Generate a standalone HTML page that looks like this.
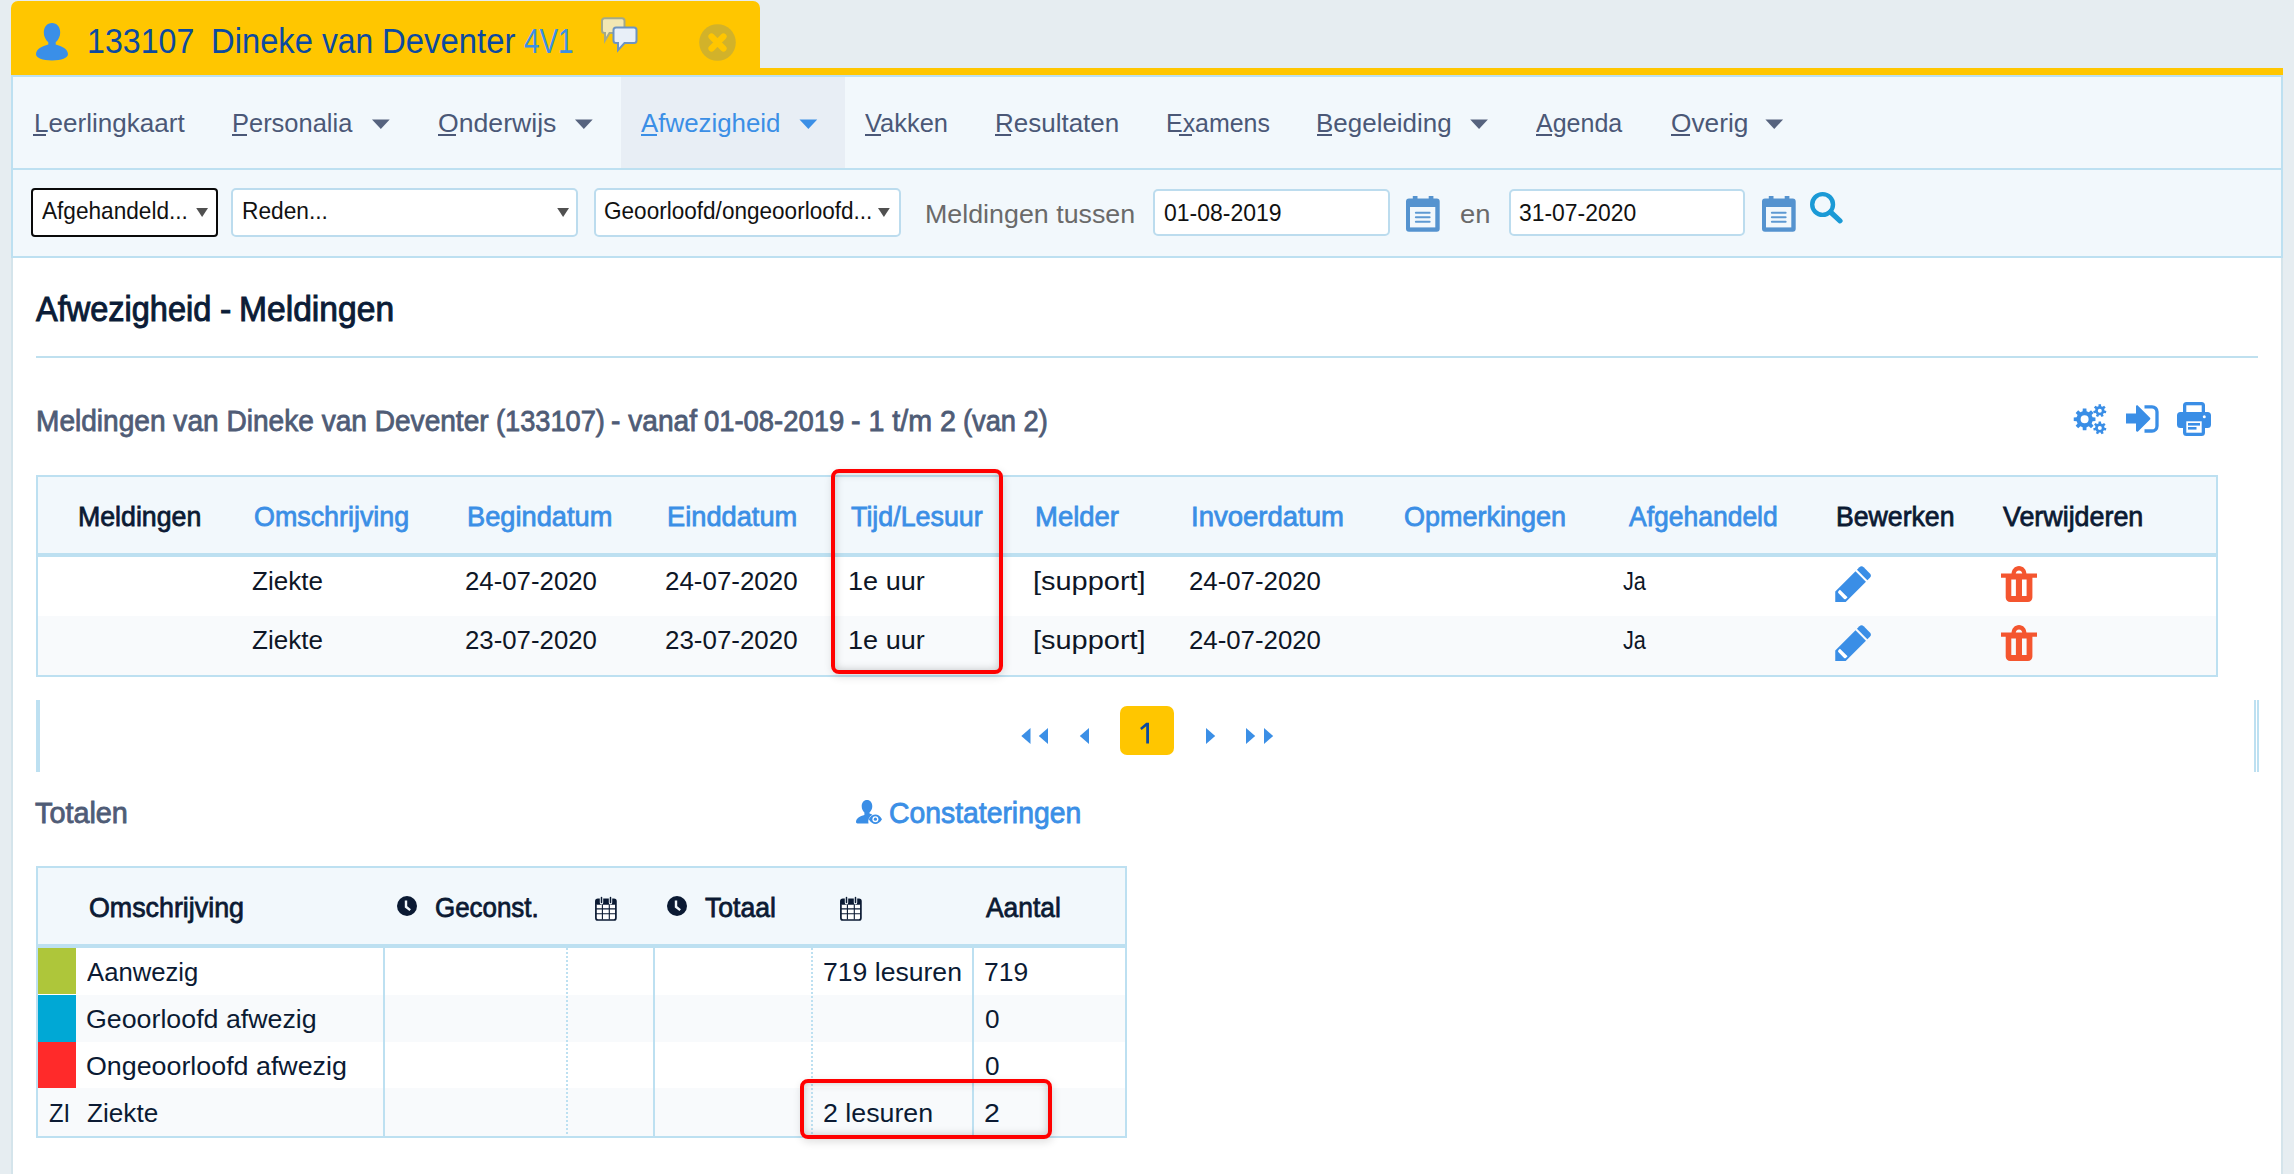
<!DOCTYPE html>
<html><head><meta charset="utf-8"><title>Afwezigheid - Meldingen</title>
<style>
html,body{margin:0;padding:0;}
body{width:2294px;height:1174px;overflow:hidden;background:#e6edf1;position:relative;font-family:'Liberation Sans',sans-serif;}
.a{position:absolute;box-sizing:border-box;}
.t{position:absolute;white-space:nowrap;line-height:1;transform-origin:0 0;font-family:'Liberation Sans',sans-serif;}
svg{position:absolute;overflow:visible;}
</style></head><body>
<!-- tab -->
<div class="a" style="left:11px;top:1px;width:749px;height:74px;background:#ffc600;border-radius:7px 7px 0 0"></div>
<div class="a" style="left:11px;top:68px;width:2272px;height:7px;background:#ffc600"></div>
<!-- user icon -->
<svg style="left:36px;top:23px" width="32" height="38" viewBox="0 0 32 38">
 <path fill="#3a8fe8" d="M16 0c5 0 8.2 4 8.2 9.5c0 4.2-2 7.5-4.5 9.8v2.2c6.2 1.6 12.3 4.6 12.3 9.8c0 3.6-6.5 6.2-16 6.2S0 34.9 0 31.3c0-5.2 6.1-8.2 12.3-9.8v-2.2C9.8 17 7.8 13.7 7.8 9.5C7.8 4 11 0 16 0z"/>
</svg>
<!-- chat icon -->
<svg style="left:600px;top:16px" width="40" height="36" viewBox="0 0 40 36">
 <path fill="#f2e7b3" stroke="#a3a98a" stroke-width="2" d="M4.5 2.3h17.5a2.5 2.5 0 0 1 2.5 2.5v9.7a2.5 2.5 0 0 1-2.5 2.5H9.5l-4.5 7.5v-7.5h-0.5a2.5 2.5 0 0 1-2.5-2.5V4.8a2.5 2.5 0 0 1 2.5-2.5z"/>
 <path fill="#e8eff8" stroke="#6d94c3" stroke-width="2" d="M16 11.4h18a2.5 2.5 0 0 1 2.5 2.5v10.7a2.5 2.5 0 0 1-2.5 2.5H24.5l-6.5 7v-7h-2a2.5 2.5 0 0 1-2.5-2.5V13.9a2.5 2.5 0 0 1 2.5-2.5z"/>
</svg>
<!-- close icon -->
<svg style="left:699px;top:23.5px" width="37" height="37" viewBox="0 0 37 37">
 <circle cx="18.5" cy="18.5" r="18.3" fill="#d2b22a"/>
 <path d="M12.5 12.5L24.5 24.5M24.5 12.5L12.5 24.5" stroke="#ffc600" stroke-width="6.2" stroke-linecap="round"/>
</svg>
<!-- panel -->
<div class="a" style="left:11px;top:75px;width:2272px;height:183px;background:#f2f8fc;border:2px solid #bde0f1"></div>
<div class="a" style="left:13px;top:168px;width:2268px;height:2px;background:#bde0f1"></div>
<div class="a" style="left:621px;top:77px;width:224px;height:91px;background:#e8eef5"></div>
<div class="a" style="left:11px;top:258px;width:2272px;height:916px;background:#fff;border-left:2px solid #d4e4eb;border-right:2px solid #d4e4eb"></div>
<!-- nav triangles -->
<svg style="left:0;top:0" width="2294" height="200">
 <g fill="#56637e">
  <path d="M372 119.4h17.7l-8.85 9.6z"/>
  <path d="M575 119.4h17.7l-8.85 9.6z"/>
  <path d="M1470.2 119.4h17.7l-8.85 9.6z"/>
  <path d="M1765.4 119.4h17.7l-8.85 9.6z"/>
 </g>
 <path fill="#3b8fe6" d="M799.5 119.4h17.7l-8.85 9.6z"/>
</svg>
<!-- nav underlines -->
<div class="a" style="left:33px;top:134px;width:13px;height:2px;background:#4b5877"></div>
<div class="a" style="left:232px;top:134px;width:15px;height:2px;background:#4b5877"></div>
<div class="a" style="left:438px;top:134px;width:18px;height:2px;background:#4b5877"></div>
<div class="a" style="left:641px;top:134px;width:16px;height:2px;background:#3b8fe6"></div>
<div class="a" style="left:865px;top:134px;width:16px;height:2px;background:#4b5877"></div>
<div class="a" style="left:995px;top:134px;width:16px;height:2px;background:#4b5877"></div>
<div class="a" style="left:1179px;top:134px;width:13px;height:2px;background:#4b5877"></div>
<div class="a" style="left:1317px;top:134px;width:15px;height:2px;background:#4b5877"></div>
<div class="a" style="left:1536px;top:134px;width:16px;height:2px;background:#4b5877"></div>
<div class="a" style="left:1671px;top:134px;width:19px;height:2px;background:#4b5877"></div>
<!-- selects -->
<div class="a" style="left:31px;top:188px;width:186.5px;height:48.5px;background:#fff;border:2.3px solid #0a0a0a;border-radius:4px"></div>
<div class="a" style="left:231.4px;top:188px;width:347px;height:48.5px;background:#fff;border:2px solid #bcdcee;border-radius:5px"></div>
<div class="a" style="left:593.6px;top:188px;width:307px;height:48.5px;background:#fff;border:2px solid #bcdcee;border-radius:5px"></div>
<div class="a" style="left:1152.6px;top:188.5px;width:237.5px;height:47.7px;background:#fff;border:2px solid #bcdcee;border-radius:5px"></div>
<div class="a" style="left:1508.8px;top:188.5px;width:236.5px;height:47.7px;background:#fff;border:2px solid #bcdcee;border-radius:5px"></div>
<svg style="left:0;top:0" width="2294" height="260">
 <g fill="#505050">
  <path d="M196.2 208h11.8l-5.9 9z"/>
  <path d="M557.2 208h11.8l-5.9 9z"/>
  <path d="M878 208h11.8l-5.9 9z"/>
 </g>
</svg>
<!-- calendar icons -->
<svg style="left:1406px;top:196px" width="34" height="36" viewBox="0 0 34 36">
 <path fill="#5593cf" d="M6.8 0h4.7v2.6h11.2V0h4.7v2.6h3.3a3 3 0 0 1 3 3v27.2a3 3 0 0 1-3 3H3a3 3 0 0 1-3-3V5.6a3 3 0 0 1 3-3h3.8z"/>
 <rect x="4" y="11" width="25.3" height="20.4" fill="#f2f8fc"/>
 <path d="M9.9 16.8h13.7M9.9 21.3h13.7M9.9 25.8h13.7" stroke="#5d99d2" stroke-width="2.1" stroke-linecap="round"/>
</svg>
<svg style="left:1762px;top:196px" width="34" height="36" viewBox="0 0 34 36">
 <path fill="#5593cf" d="M6.8 0h4.7v2.6h11.2V0h4.7v2.6h3.3a3 3 0 0 1 3 3v27.2a3 3 0 0 1-3 3H3a3 3 0 0 1-3-3V5.6a3 3 0 0 1 3-3h3.8z"/>
 <rect x="4" y="11" width="25.3" height="20.4" fill="#f2f8fc"/>
 <path d="M9.9 16.8h13.7M9.9 21.3h13.7M9.9 25.8h13.7" stroke="#5d99d2" stroke-width="2.1" stroke-linecap="round"/>
</svg>
<!-- search -->
<svg style="left:1812px;top:192.2px" width="34" height="32" viewBox="0 0 34 32">
 <circle cx="10.6" cy="12.5" r="10.4" fill="none" stroke="#1b9ad6" stroke-width="4.4"/>
 <path d="M18.5 20L28 28.8" stroke="#1b9ad6" stroke-width="5.2" stroke-linecap="round"/>
</svg>
<!-- hr -->
<div class="a" style="left:36px;top:355.5px;width:2222px;height:2px;background:#bfe0ef"></div>
<!-- toolbar icons -->
<svg style="left:2074px;top:404px" width="33" height="32" viewBox="0 0 33 32">
 <path fill="#3a8ee6" fill-rule="evenodd" d="M8.62 7.34 L8.79 4.45 L12.41 4.45 L12.58 7.34 L14.83 8.27 L17.00 6.35 L19.55 8.90 L17.63 11.07 L18.56 13.32 L21.45 13.49 L21.45 17.11 L18.56 17.28 L17.63 19.53 L19.55 21.70 L17.00 24.25 L14.83 22.33 L12.58 23.26 L12.41 26.15 L8.79 26.15 L8.62 23.26 L6.37 22.33 L4.20 24.25 L1.65 21.70 L3.57 19.53 L2.64 17.28 L-0.25 17.11 L-0.25 13.49 L2.64 13.32 L3.57 11.07 L1.65 8.90 L4.20 6.35 L6.37 8.27ZM14.60 15.30A4.0 4.0 0 1 0 6.60 15.30A4.0 4.0 0 1 0 14.60 15.30Z"/>
 <path fill="#3a8ee6" fill-rule="evenodd" d="M24.51 2.18 L24.56 0.22 L27.04 0.22 L27.09 2.18 L28.53 2.87 L30.10 1.69 L31.64 3.62 L30.14 4.89 L30.49 6.45 L32.40 6.94 L31.85 9.35 L29.92 8.96 L28.92 10.21 L29.73 12.00 L27.50 13.08 L26.60 11.33 L25.00 11.33 L24.10 13.08 L21.87 12.00 L22.68 10.21 L21.68 8.96 L19.75 9.35 L19.20 6.94 L21.11 6.45 L21.46 4.89 L19.96 3.62 L21.50 1.69 L23.07 2.87ZM27.80 6.70A2.0 2.0 0 1 0 23.80 6.70A2.0 2.0 0 1 0 27.80 6.70Z"/>
 <path fill="#3a8ee6" fill-rule="evenodd" d="M24.51 19.38 L24.56 17.42 L27.04 17.42 L27.09 19.38 L28.53 20.07 L30.10 18.89 L31.64 20.82 L30.14 22.09 L30.49 23.65 L32.40 24.14 L31.85 26.55 L29.92 26.16 L28.92 27.41 L29.73 29.20 L27.50 30.28 L26.60 28.53 L25.00 28.53 L24.10 30.28 L21.87 29.20 L22.68 27.41 L21.68 26.16 L19.75 26.55 L19.20 24.14 L21.11 23.65 L21.46 22.09 L19.96 20.82 L21.50 18.89 L23.07 20.07ZM27.80 23.90A2.0 2.0 0 1 0 23.80 23.90A2.0 2.0 0 1 0 27.80 23.90Z"/>
</svg>
<svg style="left:2125.5px;top:405px" width="33" height="28" viewBox="0 0 33 28">
 <path fill="#3a8ee6" d="M0 8.5h10V1.5c0-1 1.2-1.5 2-.8l12 12c.5.5.5 1.2 0 1.7l-12 12c-.8.7-2 .2-2-.8V18.5H0z"/>
 <path fill="none" stroke="#3a8ee6" stroke-width="3.3" d="M18.5 1.8H26a5 5 0 0 1 5 5V21a5 5 0 0 1-5 5h-7.5"/>
</svg>
<svg style="left:2177px;top:402px" width="34" height="34" viewBox="0 0 34 34">
 <path fill="#3a8ee6" d="M6 3.5a3.5 3.5 0 0 1 3.5-3.5h15a3.5 3.5 0 0 1 3.5 3.5V10h2.5a3.5 3.5 0 0 1 3.5 3.5v9a3.5 3.5 0 0 1-3.5 3.5H28v4.5a3.5 3.5 0 0 1-3.5 3.5h-15A3.5 3.5 0 0 1 6 30.5V26H3.5A3.5 3.5 0 0 1 0 22.5v-9A3.5 3.5 0 0 1 3.5 10H6z"/>
 <rect x="9.3" y="3.3" width="15.4" height="6.7" fill="#fff"/>
 <rect x="9.3" y="19.3" width="15.4" height="11.4" fill="#fff"/>
 <rect x="11" y="21" width="12" height="2.6" fill="#3a8ee6"/>
 <rect x="11" y="25" width="8.5" height="2.6" fill="#3a8ee6"/>
 <circle cx="27.3" cy="14.8" r="1.5" fill="#fff"/>
</svg>
<!-- main table -->
<div class="a" style="left:36px;top:475px;width:2181.5px;height:202px;border:2px solid #bde0f1;background:#fff"></div>
<div class="a" style="left:38px;top:477px;width:2177.5px;height:76px;background:#f2f8fc"></div>
<div class="a" style="left:38px;top:553px;width:2177.5px;height:4px;background:#bde0f1"></div>
<div class="a" style="left:38px;top:616.4px;width:2177.5px;height:58.6px;background:#f8fafc"></div>
<!-- pencil & trash -->
<svg style="left:1835px;top:565.5px" width="38.5" height="37" viewBox="0 0 37 36"><path fill="#3a8ee6" d="M23.5 1.3a3 3 0 0 1 4.2 0l6 6a3 3 0 0 1 0 4.2l-2.4 2.4L21.1 3.7z"/>
   <path fill="#3a8ee6" d="M19.7 5.1L29.9 15.3 10.2 35H0V24.8z"/>
   <path fill="#fff" d="M3.2 24.4l1.4-1.4 7.4 7.4-1.4 1.4a1.6 1.6 0 0 1-2.2 0l-5.2-5.2a1.6 1.6 0 0 1 0-2.2z"/></svg>
<svg style="left:1835px;top:624.5px" width="38.5" height="37" viewBox="0 0 37 36"><path fill="#3a8ee6" d="M23.5 1.3a3 3 0 0 1 4.2 0l6 6a3 3 0 0 1 0 4.2l-2.4 2.4L21.1 3.7z"/>
   <path fill="#3a8ee6" d="M19.7 5.1L29.9 15.3 10.2 35H0V24.8z"/>
   <path fill="#fff" d="M3.2 24.4l1.4-1.4 7.4 7.4-1.4 1.4a1.6 1.6 0 0 1-2.2 0l-5.2-5.2a1.6 1.6 0 0 1 0-2.2z"/></svg>
<svg style="left:2001px;top:566px" width="36" height="36" viewBox="0 0 36 36"><path fill="#f4552f" d="M0 7.6h36v4.2H0z"/>
   <path fill="#f4552f" d="M10.5 8.5C10.5 3.5 13.8 0 18 0s7.5 3.5 7.5 8.5h-4.2c0-2.5-1.4-4-3.3-4s-3.3 1.5-3.3 4z"/>
   <path fill="#f4552f" fill-rule="evenodd" d="M4.7 11h26.7v20.5a4.5 4.5 0 0 1-4.5 4.5H9.2a4.5 4.5 0 0 1-4.5-4.5zM10.3 13.6v16.4h4.6V13.6zM21 13.6v16.4h4.6V13.6z"/></svg>
<svg style="left:2001px;top:625px" width="36" height="36" viewBox="0 0 36 36"><path fill="#f4552f" d="M0 7.6h36v4.2H0z"/>
   <path fill="#f4552f" d="M10.5 8.5C10.5 3.5 13.8 0 18 0s7.5 3.5 7.5 8.5h-4.2c0-2.5-1.4-4-3.3-4s-3.3 1.5-3.3 4z"/>
   <path fill="#f4552f" fill-rule="evenodd" d="M4.7 11h26.7v20.5a4.5 4.5 0 0 1-4.5 4.5H9.2a4.5 4.5 0 0 1-4.5-4.5zM10.3 13.6v16.4h4.6V13.6zM21 13.6v16.4h4.6V13.6z"/></svg>
<!-- red box 1 -->
<div class="a" style="left:831px;top:469.2px;width:171.7px;height:205.3px;border:4.4px solid #ff0000;border-radius:8px;box-shadow:inset 0 0 9px rgba(0,0,0,0.22),1px 3px 9px rgba(0,0,0,0.13)"></div>
<!-- pagination -->
<div class="a" style="left:36px;top:700px;width:4px;height:72px;background:#bde0f1"></div>
<div class="a" style="left:2254px;top:700px;width:2px;height:72px;background:#bde0f1"></div>
<div class="a" style="left:2257px;top:700px;width:2px;height:72px;background:#bde0f1"></div>
<svg style="left:0;top:690px" width="2294" height="80">
 <g fill="#3b8fe6">
  <path d="M1030.5 38v16l-9.2-8z"/>
  <path d="M1048 38v16l-9.2-8z"/>
  <path d="M1089 38v16l-9.2-8z"/>
  <path d="M1206 38v16l9.2-8z"/>
  <path d="M1246 38v16l9.2-8z"/>
  <path d="M1264 38v16l9.2-8z"/>
 </g>
</svg>
<div class="a" style="left:1120px;top:706px;width:54px;height:49px;background:#ffc600;border-radius:7px"></div>
<svg style="left:1130px;top:715px" width="30" height="35" viewBox="1130 715 30 35">
 <path fill="#0c4aa0" d="M1146.2 722.7h2.8v20.7h-2.8V726.3l-4.6 3.7-1.5-1.9 6.1-5.4z"/>
</svg>
<!-- constateringen icon -->
<svg style="left:856px;top:800px" width="26" height="24" viewBox="0 0 26 24">
 <path fill="#3a8ee6" d="M11 0c3.2 0 5.3 2.6 5.3 6.2 0 2.7-1.2 4.8-2.8 6.2v1.2c1 .3 2 .6 2.9 1.1a7.5 7.5 0 0 0-3.9 8.8H1.5C.6 23.5 0 22.8 0 21.8c0-3.5 4-5.9 8.4-6.9v-2.5C6.8 11 5.7 8.9 5.7 6.2 5.7 2.6 7.8 0 11 0z"/>
 <path fill="#3a8ee6" d="M12.8 19.2c2-3.3 4.3-4.7 6.6-4.7s4.6 1.4 6.6 4.7c-2 3.3-4.3 4.7-6.6 4.7s-4.6-1.4-6.6-4.7z"/>
 <circle cx="19.4" cy="19.2" r="3" fill="#fff"/>
 <circle cx="19.4" cy="19.2" r="1.6" fill="#3a8ee6"/>
</svg>
<!-- totals table -->
<div class="a" style="left:36.4px;top:866px;width:1090.6px;height:272px;border:2px solid #bde0f1;background:#fff"></div>
<div class="a" style="left:38.4px;top:868px;width:1086.6px;height:75.7px;background:#f2f8fc"></div>
<div class="a" style="left:38.4px;top:943.7px;width:1086.6px;height:4.3px;background:#bde0f1"></div>
<div class="a" style="left:38.4px;top:994.5px;width:1086.6px;height:47px;background:#f8fafc"></div>
<div class="a" style="left:38.4px;top:1088.4px;width:1086.6px;height:47.6px;background:#f8fafc"></div>
<div class="a" style="left:38px;top:947.8px;width:38px;height:46.7px;background:#aec63a"></div>
<div class="a" style="left:38px;top:994.5px;width:38px;height:47px;background:#00a8d5"></div>
<div class="a" style="left:38px;top:1041.5px;width:38px;height:46.9px;background:#ff2a2a"></div>
<div class="a" style="left:383px;top:947.8px;width:2px;height:188.2px;background:#bde0f1"></div>
<div class="a" style="left:653px;top:947.8px;width:2px;height:188.2px;background:#bde0f1"></div>
<div class="a" style="left:972px;top:947.8px;width:2px;height:188.2px;background:#bde0f1"></div>
<div class="a" style="left:566px;top:947.8px;width:1.5px;height:188.2px;background:repeating-linear-gradient(#bde0f1 0 2px,transparent 2px 4px)"></div>
<div class="a" style="left:811px;top:947.8px;width:1.5px;height:188.2px;background:repeating-linear-gradient(#bde0f1 0 2px,transparent 2px 4px)"></div>
<!-- header icons -->
<svg style="left:397.2px;top:896px" width="20" height="20" viewBox="0 0 20 20"><circle cx="10" cy="10" r="10" fill="#0b1a33"/>
   <path d="M9 4.5v6.3l4.2 3.3" stroke="#f2f8fc" stroke-width="2.4" fill="none"/></svg>
<svg style="left:667.2px;top:896px" width="20" height="20" viewBox="0 0 20 20"><circle cx="10" cy="10" r="10" fill="#0b1a33"/>
   <path d="M9 4.5v6.3l4.2 3.3" stroke="#f2f8fc" stroke-width="2.4" fill="none"/></svg>
<svg style="left:595px;top:896.5px" width="22" height="24" viewBox="0 0 22 24"><rect x="0.9" y="2.3" width="20" height="20.7" rx="2" fill="#fff" stroke="#0b1a33" stroke-width="1.7"/>
   <rect x="0.9" y="2.3" width="20" height="5.4" rx="1.5" fill="#0b1a33"/>
   <path d="M7.4 7.5v15M14.3 7.5v15M1 11.9h20M1 16.7h20" stroke="#0b1a33" stroke-width="1.1"/>
   <path d="M6.5 0.5v5.2M15.5 0.5v5.2" stroke="#f2f8fc" stroke-width="3.4" stroke-linecap="round"/>
   <path d="M6.5 0.6v5M15.5 0.6v5" stroke="#0b1a33" stroke-width="1.5" stroke-linecap="round"/></svg>
<svg style="left:840px;top:896.5px" width="22" height="24" viewBox="0 0 22 24"><rect x="0.9" y="2.3" width="20" height="20.7" rx="2" fill="#fff" stroke="#0b1a33" stroke-width="1.7"/>
   <rect x="0.9" y="2.3" width="20" height="5.4" rx="1.5" fill="#0b1a33"/>
   <path d="M7.4 7.5v15M14.3 7.5v15M1 11.9h20M1 16.7h20" stroke="#0b1a33" stroke-width="1.1"/>
   <path d="M6.5 0.5v5.2M15.5 0.5v5.2" stroke="#f2f8fc" stroke-width="3.4" stroke-linecap="round"/>
   <path d="M6.5 0.6v5M15.5 0.6v5" stroke="#0b1a33" stroke-width="1.5" stroke-linecap="round"/></svg>
<!-- red box 2 -->
<div class="a" style="left:799.5px;top:1079.2px;width:252px;height:60.3px;border:4.4px solid #ff0000;border-radius:8px;box-shadow:inset 0 0 9px rgba(0,0,0,0.22),1px 3px 9px rgba(0,0,0,0.13)"></div>

<div class="t" style="left:87.24px;top:23.92px;font-size:34.8px;font-weight:400;color:#0c4aa0;transform:scaleX(0.9241)">133107</div>
<div class="t" style="left:210.76px;top:23.92px;font-size:34.8px;font-weight:400;color:#0c4aa0;transform:scaleX(0.9409)">Dineke</div>
<div class="t" style="left:322.27px;top:23.92px;font-size:34.8px;font-weight:400;color:#0c4aa0;transform:scaleX(0.9117)">van</div>
<div class="t" style="left:382.15px;top:23.92px;font-size:34.8px;font-weight:400;color:#0c4aa0;transform:scaleX(0.9448)">Deventer</div>
<div class="t" style="left:524.18px;top:23.92px;font-size:34.8px;font-weight:400;color:#3a90e8;transform:scaleX(0.8014)">4V1</div>
<div class="t" style="left:34.19px;top:109.88px;font-size:26.5px;font-weight:400;color:#4b5877;transform:scaleX(0.9836)">Leerlingkaart</div>
<div class="t" style="left:231.64px;top:109.88px;font-size:26.5px;font-weight:400;color:#4b5877;transform:scaleX(0.9607)">Personalia</div>
<div class="t" style="left:437.63px;top:109.88px;font-size:26.5px;font-weight:400;color:#4b5877;transform:scaleX(1.0052)">Onderwijs</div>
<div class="t" style="left:640.99px;top:109.88px;font-size:26.5px;font-weight:400;color:#3b8fe6;transform:scaleX(0.9763)">Afwezigheid</div>
<div class="t" style="left:865.34px;top:109.88px;font-size:26.5px;font-weight:400;color:#4b5877;transform:scaleX(0.9600)">Vakken</div>
<div class="t" style="left:995.10px;top:109.88px;font-size:26.5px;font-weight:400;color:#4b5877;transform:scaleX(0.9802)">Resultaten</div>
<div class="t" style="left:1165.68px;top:109.88px;font-size:26.5px;font-weight:400;color:#4b5877;transform:scaleX(0.9411)">Examens</div>
<div class="t" style="left:1316.10px;top:109.88px;font-size:26.5px;font-weight:400;color:#4b5877;transform:scaleX(0.9798)">Begeleiding</div>
<div class="t" style="left:1536.20px;top:109.88px;font-size:26.5px;font-weight:400;color:#4b5877;transform:scaleX(0.9445)">Agenda</div>
<div class="t" style="left:1670.64px;top:109.88px;font-size:26.5px;font-weight:400;color:#4b5877;transform:scaleX(0.9921)">Overig</div>
<div class="t" style="left:42.11px;top:199.49px;font-size:24.6px;font-weight:400;color:#111111;transform:scaleX(0.9198)">Afgehandeld...</div>
<div class="t" style="left:241.84px;top:199.49px;font-size:24.6px;font-weight:400;color:#111111;transform:scaleX(0.9238)">Reden...</div>
<div class="t" style="left:603.92px;top:199.49px;font-size:24.6px;font-weight:400;color:#111111;transform:scaleX(0.9172)">Geoorloofd/ongeoorloofd...</div>
<div class="t" style="left:924.58px;top:202.31px;font-size:25.4px;font-weight:400;color:#6a6a6a;transform:scaleX(1.0561)">Meldingen tussen</div>
<div class="t" style="left:1459.79px;top:202.31px;font-size:25.4px;font-weight:400;color:#6a6a6a;transform:scaleX(1.0778)">en</div>
<div class="t" style="left:1163.68px;top:200.78px;font-size:24.5px;font-weight:400;color:#111111;transform:scaleX(0.9381)">01-08-2019</div>
<div class="t" style="left:1518.92px;top:200.78px;font-size:24.5px;font-weight:400;color:#111111;transform:scaleX(0.9349)">31-07-2020</div>
<div class="t" style="left:35.97px;top:291.59px;font-size:34.6px;font-weight:400;-webkit-text-stroke:0.97px currentColor;color:#0b1c37;transform:scaleX(0.9404)">Afwezigheid</div>
<div class="t" style="left:219.61px;top:291.59px;font-size:34.6px;font-weight:400;-webkit-text-stroke:0.97px currentColor;color:#0b1c37;transform:scaleX(0.9816)">-</div>
<div class="t" style="left:238.67px;top:291.59px;font-size:34.6px;font-weight:400;-webkit-text-stroke:0.97px currentColor;color:#0b1c37;transform:scaleX(0.9720)">Meldingen</div>
<div class="t" style="left:35.88px;top:407.35px;font-size:29px;font-weight:400;-webkit-text-stroke:0.81px currentColor;color:#4f5c76;transform:scaleX(0.9682)">Meldingen van Dineke van Deventer</div>
<div class="t" style="left:495.67px;top:407.35px;font-size:29px;font-weight:400;-webkit-text-stroke:0.81px currentColor;color:#4f5c76;transform:scaleX(0.9380)">(133107)</div>
<div class="t" style="left:611.22px;top:407.35px;font-size:29px;font-weight:400;-webkit-text-stroke:0.81px currentColor;color:#4f5c76;transform:scaleX(0.9698)">- vanaf</div>
<div class="t" style="left:703.83px;top:407.35px;font-size:29px;font-weight:400;-webkit-text-stroke:0.81px currentColor;color:#4f5c76;transform:scaleX(0.9449)">01-08-2019</div>
<div class="t" style="left:851.20px;top:407.35px;font-size:29px;font-weight:400;-webkit-text-stroke:0.81px currentColor;color:#4f5c76;transform:scaleX(0.9869)">- 1 t/m 2</div>
<div class="t" style="left:962.87px;top:407.35px;font-size:29px;font-weight:400;-webkit-text-stroke:0.81px currentColor;color:#4f5c76;transform:scaleX(0.9390)">(van 2)</div>
<div class="t" style="left:78.45px;top:502.62px;font-size:27.5px;font-weight:400;-webkit-text-stroke:0.77px currentColor;color:#0b1a33;transform:scaleX(0.9714)">Meldingen</div>
<div class="t" style="left:254.19px;top:502.62px;font-size:27.5px;font-weight:400;-webkit-text-stroke:0.77px currentColor;color:#3b8fe6;transform:scaleX(0.9765)">Omschrijving</div>
<div class="t" style="left:466.92px;top:502.62px;font-size:27.5px;font-weight:400;-webkit-text-stroke:0.77px currentColor;color:#3b8fe6;transform:scaleX(0.9904)">Begindatum</div>
<div class="t" style="left:667.02px;top:502.62px;font-size:27.5px;font-weight:400;-webkit-text-stroke:0.77px currentColor;color:#3b8fe6;transform:scaleX(0.9909)">Einddatum</div>
<div class="t" style="left:851.04px;top:502.62px;font-size:27.5px;font-weight:400;-webkit-text-stroke:0.77px currentColor;color:#3b8fe6;transform:scaleX(0.9752)">Tijd/Lesuur</div>
<div class="t" style="left:1035.40px;top:502.62px;font-size:27.5px;font-weight:400;-webkit-text-stroke:0.77px currentColor;color:#3b8fe6;transform:scaleX(0.9993)">Melder</div>
<div class="t" style="left:1190.97px;top:502.62px;font-size:27.5px;font-weight:400;-webkit-text-stroke:0.77px currentColor;color:#3b8fe6;transform:scaleX(1.0002)">Invoerdatum</div>
<div class="t" style="left:1404.19px;top:502.62px;font-size:27.5px;font-weight:400;-webkit-text-stroke:0.77px currentColor;color:#3b8fe6;transform:scaleX(0.9816)">Opmerkingen</div>
<div class="t" style="left:1628.59px;top:502.62px;font-size:27.5px;font-weight:400;-webkit-text-stroke:0.77px currentColor;color:#3b8fe6;transform:scaleX(0.9629)">Afgehandeld</div>
<div class="t" style="left:1835.96px;top:502.62px;font-size:27.5px;font-weight:400;-webkit-text-stroke:0.77px currentColor;color:#0b1a33;transform:scaleX(0.9688)">Bewerken</div>
<div class="t" style="left:2003.16px;top:502.62px;font-size:27.5px;font-weight:400;-webkit-text-stroke:0.77px currentColor;color:#0b1a33;transform:scaleX(0.9761)">Verwijderen</div>
<div class="t" style="left:251.91px;top:568.16px;font-size:26.4px;font-weight:400;color:#0e1626;transform:scaleX(0.9864)">Ziekte</div>
<div class="t" style="left:465.25px;top:568.16px;font-size:26.4px;font-weight:400;color:#0e1626;transform:scaleX(0.9772)">24-07-2020</div>
<div class="t" style="left:665.04px;top:568.16px;font-size:26.4px;font-weight:400;color:#0e1626;transform:scaleX(0.9824)">24-07-2020</div>
<div class="t" style="left:847.65px;top:568.16px;font-size:26.4px;font-weight:400;color:#0e1626;transform:scaleX(1.0257)">1e uur</div>
<div class="t" style="left:1033.00px;top:568.16px;font-size:26.4px;font-weight:400;color:#0e1626;transform:scaleX(1.0965)">[support]</div>
<div class="t" style="left:1189.35px;top:568.16px;font-size:26.4px;font-weight:400;color:#0e1626;transform:scaleX(0.9772)">24-07-2020</div>
<div class="t" style="left:1622.77px;top:568.16px;font-size:26.4px;font-weight:400;color:#0e1626;transform:scaleX(0.8229)">Ja</div>
<div class="t" style="left:251.91px;top:627.36px;font-size:26.4px;font-weight:400;color:#0e1626;transform:scaleX(0.9864)">Ziekte</div>
<div class="t" style="left:465.25px;top:627.36px;font-size:26.4px;font-weight:400;color:#0e1626;transform:scaleX(0.9772)">23-07-2020</div>
<div class="t" style="left:665.04px;top:627.36px;font-size:26.4px;font-weight:400;color:#0e1626;transform:scaleX(0.9824)">23-07-2020</div>
<div class="t" style="left:847.65px;top:627.36px;font-size:26.4px;font-weight:400;color:#0e1626;transform:scaleX(1.0257)">1e uur</div>
<div class="t" style="left:1033.00px;top:627.36px;font-size:26.4px;font-weight:400;color:#0e1626;transform:scaleX(1.0965)">[support]</div>
<div class="t" style="left:1189.35px;top:627.36px;font-size:26.4px;font-weight:400;color:#0e1626;transform:scaleX(0.9772)">24-07-2020</div>
<div class="t" style="left:1622.77px;top:627.36px;font-size:26.4px;font-weight:400;color:#0e1626;transform:scaleX(0.8229)">Ja</div>
<div class="t" style="left:35.33px;top:797.69px;font-size:29.9px;font-weight:400;-webkit-text-stroke:0.84px currentColor;color:#4f5c76;transform:scaleX(0.9638)">Totalen</div>
<div class="t" style="left:889.42px;top:797.69px;font-size:29.9px;font-weight:400;-webkit-text-stroke:0.84px currentColor;color:#3b8fe6;transform:scaleX(0.9479)">Constateringen</div>
<div class="t" style="left:89.18px;top:893.57px;font-size:27.8px;font-weight:400;-webkit-text-stroke:0.78px currentColor;color:#0b1a33;transform:scaleX(0.9648)">Omschrijving</div>
<div class="t" style="left:435.46px;top:893.57px;font-size:27.8px;font-weight:400;-webkit-text-stroke:0.78px currentColor;color:#0b1a33;transform:scaleX(0.9323)">Geconst.</div>
<div class="t" style="left:705.34px;top:893.57px;font-size:27.8px;font-weight:400;-webkit-text-stroke:0.78px currentColor;color:#0b1a33;transform:scaleX(0.9563)">Totaal</div>
<div class="t" style="left:985.99px;top:893.57px;font-size:27.8px;font-weight:400;-webkit-text-stroke:0.78px currentColor;color:#0b1a33;transform:scaleX(0.9488)">Aantal</div>
<div class="t" style="left:86.99px;top:958.86px;font-size:26.4px;font-weight:400;color:#0b1a33;transform:scaleX(0.9731)">Aanwezig</div>
<div class="t" style="left:822.68px;top:958.86px;font-size:26.4px;font-weight:400;color:#0b1a33;transform:scaleX(1.0072)">719 lesuren</div>
<div class="t" style="left:984.39px;top:958.86px;font-size:26.4px;font-weight:400;color:#0b1a33;transform:scaleX(1.0019)">719</div>
<div class="t" style="left:85.87px;top:1005.76px;font-size:26.4px;font-weight:400;color:#0b1a33;transform:scaleX(1.0145)">Geoorloofd afwezig</div>
<div class="t" style="left:984.90px;top:1005.76px;font-size:26.4px;font-weight:400;color:#0b1a33;transform:scaleX(0.9910)">0</div>
<div class="t" style="left:86.32px;top:1052.66px;font-size:26.4px;font-weight:400;color:#0b1a33;transform:scaleX(1.0162)">Ongeoorloofd afwezig</div>
<div class="t" style="left:984.90px;top:1052.66px;font-size:26.4px;font-weight:400;color:#0b1a33;transform:scaleX(0.9910)">0</div>
<div class="t" style="left:49.28px;top:1099.66px;font-size:26.4px;font-weight:400;color:#0b1a33;transform:scaleX(0.9009)">ZI</div>
<div class="t" style="left:86.51px;top:1099.66px;font-size:26.4px;font-weight:400;color:#0b1a33;transform:scaleX(0.9907)">Ziekte</div>
<div class="t" style="left:822.60px;top:1099.66px;font-size:26.4px;font-weight:400;color:#0b1a33;transform:scaleX(1.0136)">2 lesuren</div>
<div class="t" style="left:984.31px;top:1099.66px;font-size:26.4px;font-weight:400;color:#0b1a33;transform:scaleX(1.0780)">2</div>
</body></html>
